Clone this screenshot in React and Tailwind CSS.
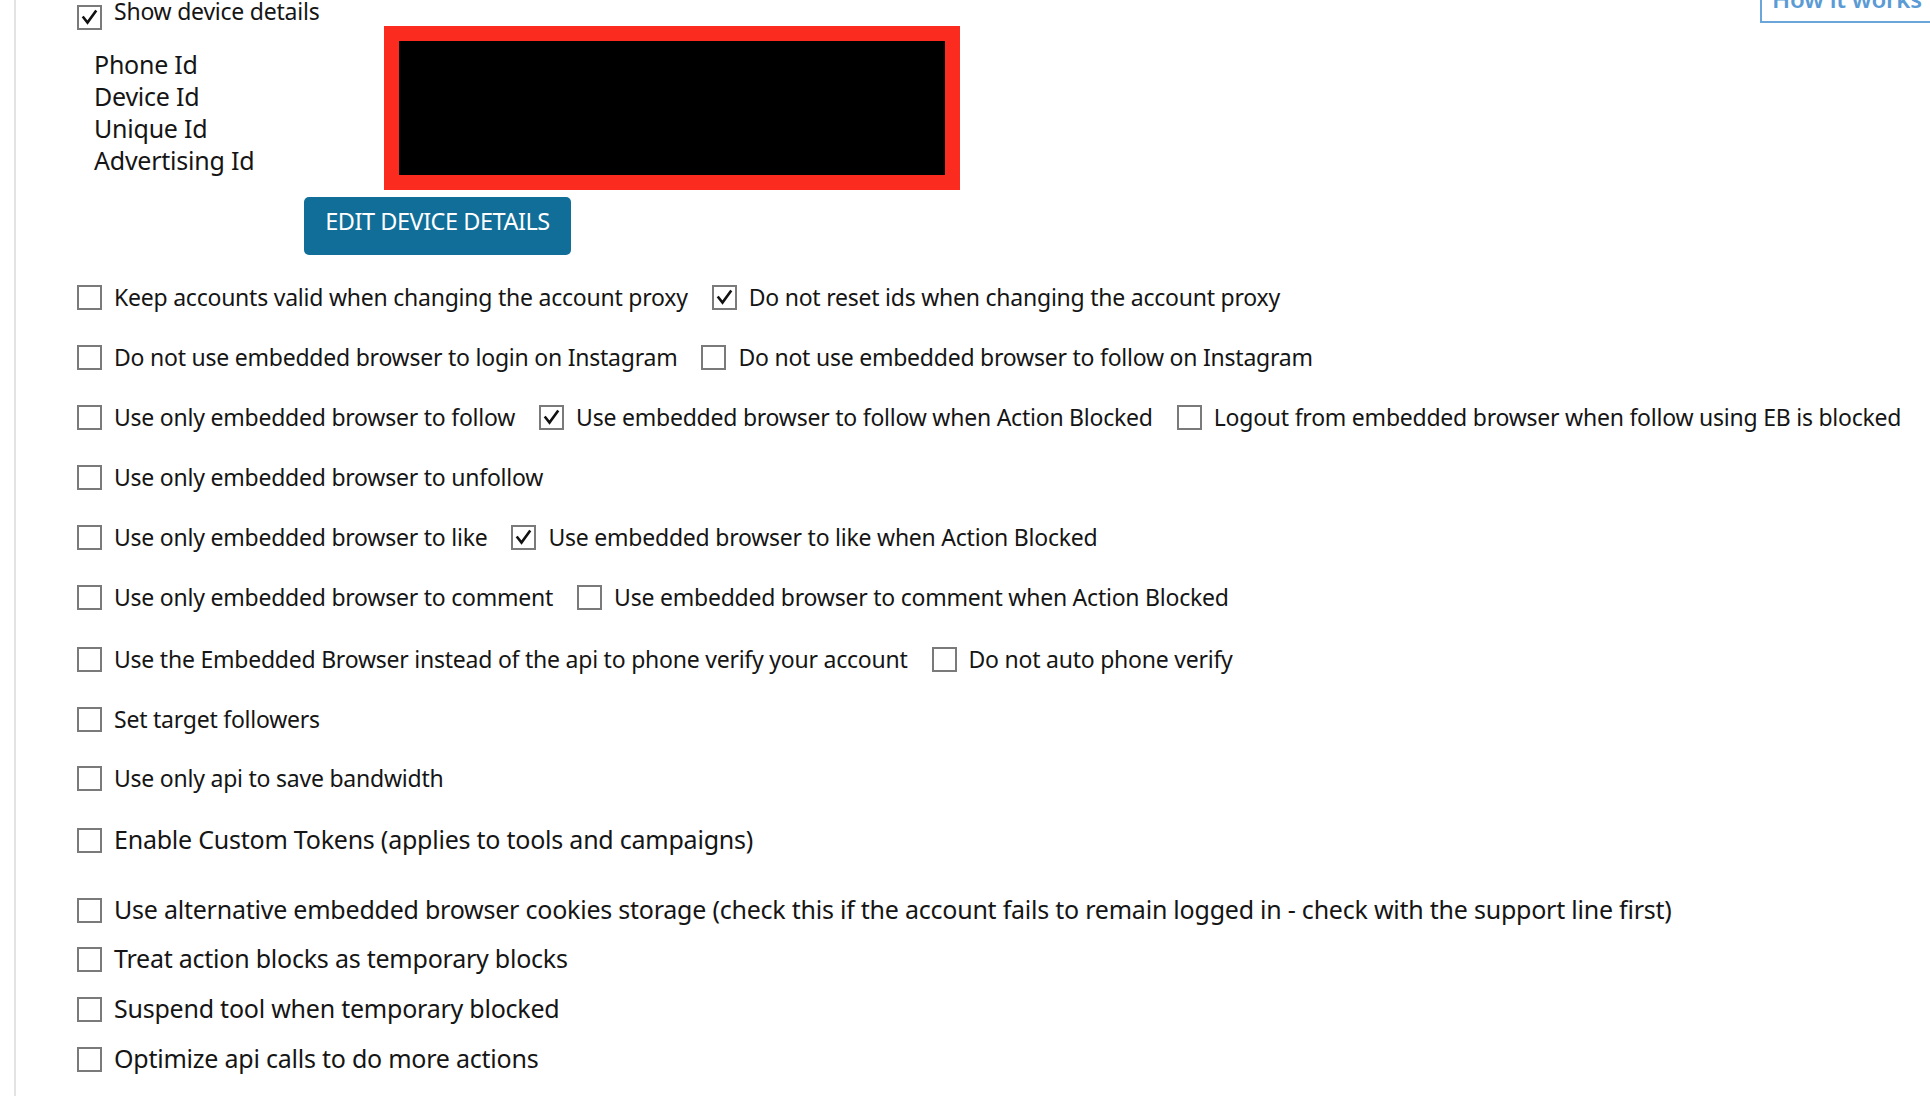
import React from "react";

const FONT = { fontFamily: '"Noto Sans", "Open Sans", Arial, sans-serif' };

function Box({ checked, className = "" }) {
  return (
    <span className={`w-[25px] h-[25px] shrink-0 border-2 border-[#7a7a7a] bg-white flex items-center justify-center ${className}`}>
      {checked ? (
        <svg width="19" height="19" viewBox="0 0 19 19">
          <path d="M3.5 9.5 L7.5 14.5 L15.5 3.5" fill="none" stroke="#111" strokeWidth="2.6" strokeLinecap="square" strokeLinejoin="miter" />
        </svg>
      ) : null}
    </span>
  );
}

function Item({ checked, label, big }) {
  return (
    <span className={`flex items-center gap-[12px] mr-[24px] whitespace-nowrap ${big ? "text-[25px]" : "text-[23px]"}`}>
      <Box checked={checked} />
      <span>{label}</span>
    </span>
  );
}

const rows = [
  { mt: "mt-[27px]", items: [[false, "Keep accounts valid when changing the account proxy"], [true, "Do not reset ids when changing the account proxy"]] },
  { mt: "mt-[30px]", items: [[false, "Do not use embedded browser to login on Instagram"], [false, "Do not use embedded browser to follow on Instagram"]] },
  { mt: "mt-[30px]", items: [[false, "Use only embedded browser to follow"], [true, "Use embedded browser to follow when Action Blocked"], [false, "Logout from embedded browser when follow using EB is blocked"]] },
  { mt: "mt-[30px]", items: [[false, "Use only embedded browser to unfollow"]] },
  { mt: "mt-[30px]", items: [[false, "Use only embedded browser to like"], [true, "Use embedded browser to like when Action Blocked"]] },
  { mt: "mt-[30px]", items: [[false, "Use only embedded browser to comment"], [false, "Use embedded browser to comment when Action Blocked"]] },
  { mt: "mt-[32px]", items: [[false, "Use the Embedded Browser instead of the api to phone verify your account"], [false, "Do not auto phone verify"]] },
  { mt: "mt-[30px]", items: [[false, "Set target followers"]] },
  { mt: "mt-[29px]", items: [[false, "Use only api to save bandwidth"]] },
  { mt: "mt-[32px]", big: true, items: [[false, "Enable Custom Tokens (applies to tools and campaigns)"]] },
  { mt: "mt-[40px]", big: true, items: [[false, "Use alternative embedded browser cookies storage (check this if the account fails to remain logged in - check with the support line first)"]] },
  { mt: "mt-[19px]", big: true, items: [[false, "Treat action blocks as temporary blocks"]] },
  { mt: "mt-[20px]", big: true, items: [[false, "Suspend tool when temporary blocked"]] },
  { mt: "mt-[20px]", big: true, items: [[false, "Optimize api calls to do more actions"]] },
];

export default function App() {
  return (
    <div
      className="relative w-[1930px] h-[1096px] bg-white overflow-hidden text-[#151515] text-[23px] tracking-[-0.01em]"
      style={FONT}
    >
      <div className="absolute left-[1760px] top-[-40px] w-[200px] h-[63px] border-2 border-[#6aa6da] bg-white pl-[10px] pt-[17px] text-[#5b9bd5] text-[24px] leading-[40px] font-semibold">
        How it works
      </div>
      <div className="ml-[14px] h-full border-l-2 border-[#e3e3e3] pl-[61px]">
        <div className="flex items-start gap-[12px] h-[30px] whitespace-nowrap">
          <Box checked className="mt-[5px]" />
          <span className="leading-[23px]">Show device details</span>
        </div>
        <div className="flex mt-[-4px]">
          <div className="w-[290px] ml-[17px] pt-[22px] flex flex-col leading-[32px] text-[25px]">
            <span>Phone Id</span>
            <span>Device Id</span>
            <span>Unique Id</span>
            <span>Advertising Id</span>
          </div>
          <div className="w-[576px] h-[164px] border-[15px] border-[#fb2b1f] bg-black" />
        </div>
        <div className="mt-[7px] ml-[227px] w-[267px] h-[58px] rounded-[5px] bg-[#106e98] text-white text-[23.5px] flex items-center justify-center pb-[8px] tracking-[-0.02em]">
          EDIT DEVICE DETAILS
        </div>
        {rows.map((r, i) => (
          <div key={i} className={`flex items-center h-[30px] ${r.mt}`}>
            {r.items.map(([c, l], j) => (
              <Item key={j} checked={c} label={l} big={r.big} />
            ))}
          </div>
        ))}
      </div>
    </div>
  );
}
